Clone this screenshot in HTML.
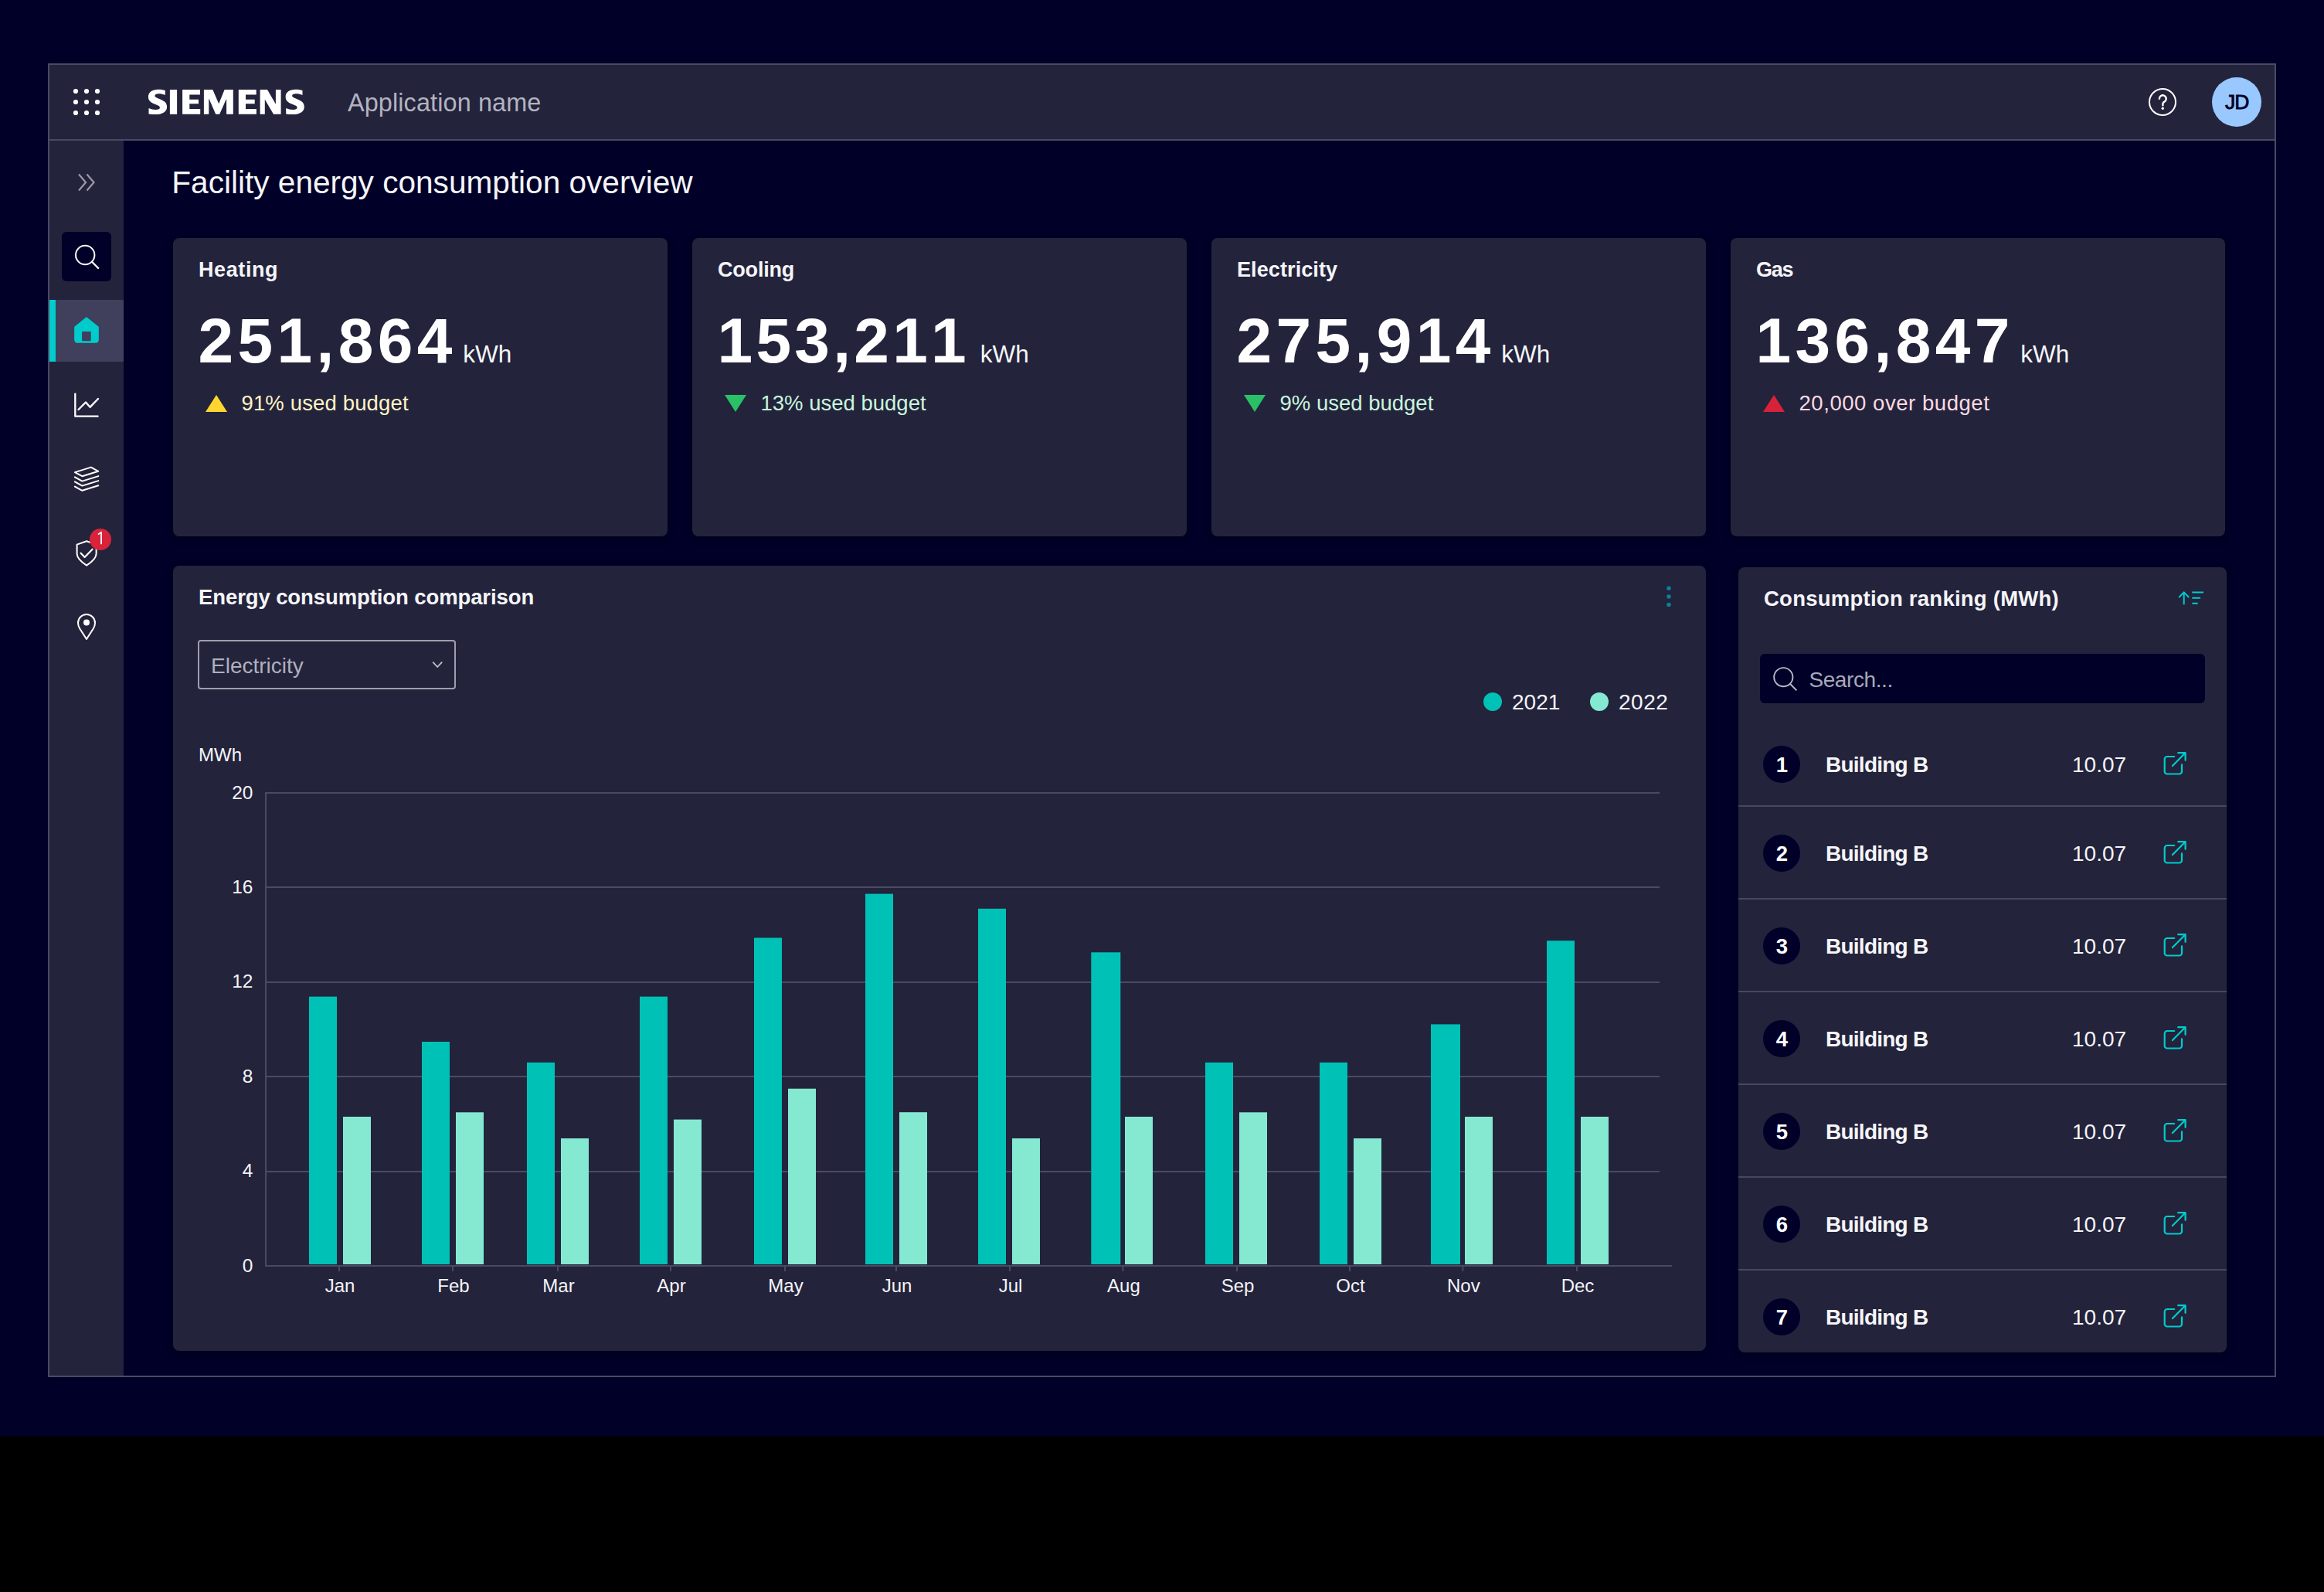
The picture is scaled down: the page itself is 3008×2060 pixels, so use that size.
<!DOCTYPE html>
<html><head><meta charset="utf-8"><title>Facility energy consumption overview</title>
<style>
html,body{margin:0;padding:0;background:#000;}
body{width:3008px;height:2060px;overflow:hidden;}
@media (max-width:2200px){body{zoom:0.5;}}
body{position:relative;font-family:"Liberation Sans", sans-serif;}
.t{position:absolute;white-space:nowrap;}
.r{position:absolute;}
.s{position:absolute;overflow:visible;}
</style></head><body>
<div class="r" style="left:0px;top:0px;width:3008px;height:1858px;background:#000028;border-radius:0px;"></div>
<div class="r" style="left:0px;top:1858px;width:3008px;height:202px;background:#000000;border-radius:0px;"></div>
<div class="r" style="left:62px;top:82px;width:2880px;height:1696px;border:2px solid #4a4a66;background:#000028"></div>
<div class="r" style="left:64px;top:84px;width:2880px;height:96px;background:#23233c;border-radius:0px;"></div>
<div class="r" style="left:64px;top:180px;width:2880px;height:2px;background:#4a4a66;border-radius:0px;"></div>
<div class="r" style="left:64px;top:182px;width:96px;height:1598px;background:#23233c;border-radius:0px;"></div>
<svg class="s" style="left:90px;top:110px;" width="44" height="44" viewBox="90 110 44 44"><circle cx="98" cy="118" r="3.1" fill="#fff"/><circle cx="98" cy="132" r="3.1" fill="#fff"/><circle cx="98" cy="146" r="3.1" fill="#fff"/><circle cx="112" cy="118" r="3.1" fill="#fff"/><circle cx="112" cy="132" r="3.1" fill="#fff"/><circle cx="112" cy="146" r="3.1" fill="#fff"/><circle cx="126" cy="118" r="3.1" fill="#fff"/><circle cx="126" cy="132" r="3.1" fill="#fff"/><circle cx="126" cy="146" r="3.1" fill="#fff"/></svg>
<svg class="s" style="left:186px;top:110px;" width="214" height="44" viewBox="186 110 214 44"><path d="M213.8 117.1 C210.5 116.2 207.8 115.8 204.8 115.8 C197 115.8 191.9 119.6 191.9 125.2 C191.9 130.5 195.5 132.6 200.5 134.8 L204.5 136.6 C206.3 137.4 206.9 138.2 206.9 139.3 C206.9 141 205 141.9 201.5 141.9 C198.5 141.9 195.3 141.2 192.5 140 V147.6 C195.5 148 198.5 148.1 201.5 148.1 C210.5 148.1 216.1 144.5 216.1 138.3 C216.1 133 212.8 130.8 208 128.7 L204 127 C201.5 126 200.4 125.2 200.4 124 C200.4 122.4 202.2 121.3 205.4 121.3 C208.2 121.3 211 121.9 213.8 122.9 Z" fill="#fff"/><path d="M213.8 117.1 C210.5 116.2 207.8 115.8 204.8 115.8 C197 115.8 191.9 119.6 191.9 125.2 C191.9 130.5 195.5 132.6 200.5 134.8 L204.5 136.6 C206.3 137.4 206.9 138.2 206.9 139.3 C206.9 141 205 141.9 201.5 141.9 C198.5 141.9 195.3 141.2 192.5 140 V147.6 C195.5 148 198.5 148.1 201.5 148.1 C210.5 148.1 216.1 144.5 216.1 138.3 C216.1 133 212.8 130.8 208 128.7 L204 127 C201.5 126 200.4 125.2 200.4 124 C200.4 122.4 202.2 121.3 205.4 121.3 C208.2 121.3 211 121.9 213.8 122.9 Z" fill="#fff" transform="translate(177.7 0)"/><rect x="219.9" y="116.1" width="9.2" height="31.7" fill="#fff"/><path d="M236.1 116.1 H259 V122.5 H245.3 V128.7 H257 V134.3 H245.3 V140.9 H259.2 V147.8 H236.1 Z" fill="#fff"/><path d="M236.1 116.1 H259 V122.5 H245.3 V128.7 H257 V134.3 H245.3 V140.9 H259.2 V147.8 H236.1 Z" fill="#fff" transform="translate(72.7 0)"/><path d="M263.9 116.1 H275.3 L283.2 134.2 L290.6 116.1 H301.8 V147.8 H293.1 V127.8 L284.2 147.8 H279.2 L270.3 127.3 V147.8 H263.9 Z" fill="#fff"/><path d="M336.6 116.1 H346 L356.9 134.7 V116.1 H363.6 V147.8 H354 L342.8 128.8 V147.8 H336.6 Z" fill="#fff"/></svg>
<div class="t" style="left:450.00px;top:117.27px;font-size:32.4px;line-height:32.4px;color:#b3b3c0;font-weight:400;letter-spacing:0.12px;">Application name</div>
<svg class="s" style="left:2775px;top:108px;" width="48" height="48" viewBox="2775 108 48 48"><circle cx="2799" cy="132" r="17" fill="none" stroke="#fff" stroke-width="2"/><path d="M2794.9 127.8 A4.4 4.4 0 1 1 2802.6 130.6 L2800.3 132.5 Q2799.4 133.2 2799.4 134.2 V136.3" fill="none" stroke="#fff" stroke-width="2.4" stroke-linecap="round" stroke-linejoin="round"/><circle cx="2799.3" cy="140.2" r="1.7" fill="#fff"/></svg>
<div class="r" style="left:2863px;top:100px;width:64px;height:64px;border-radius:50%;background:#99c8ff"></div>
<div class="t" style="left:2395.30px;width:1000px;text-align:center;top:119.27px;font-size:26.5px;line-height:26.5px;color:#000028;font-weight:400;letter-spacing:-1.0px;-webkit-text-stroke:0.8px #000028;">JD</div>
<svg class="s" style="left:96px;top:220px;" width="32" height="32" viewBox="96 220 32 32"><path d="M102 225.5 L111 236 L102 246.5 M112.5 225.5 L121.5 236 L112.5 246.5" fill="none" stroke="#9999aa" stroke-width="2.2"/></svg>
<div class="r" style="left:80px;top:300px;width:64px;height:64px;background:#000028;border-radius:6px;"></div>
<svg class="s" style="left:90px;top:310px;" width="44" height="44" viewBox="90 310 44 44"><circle cx="110.2" cy="330" r="12.2" fill="none" stroke="#fff" stroke-width="2"/><path d="M119 338.8 L127.8 347.6" stroke="#fff" stroke-width="2.2"/></svg>
<div class="r" style="left:64px;top:388px;width:96px;height:80px;background:#403f5c;border-radius:0px;"></div>
<div class="r" style="left:64px;top:388px;width:8px;height:80px;background:#00cccc;border-radius:0px;"></div>
<svg class="s" style="left:94px;top:406px;" width="36" height="40" viewBox="94 406 36 40"><path d="M111.9 411.6 L126.6 423.4 V439.7 a2.9 2.9 0 0 1 -2.9 2.9 H100.3 a2.9 2.9 0 0 1 -2.9 -2.9 V423.4 Z" fill="#00cccc" stroke="#00cccc" stroke-width="2.5" stroke-linejoin="round"/><rect x="106.1" y="429" width="11.6" height="12.2" rx="0.8" fill="#403f5c"/></svg>
<svg class="s" style="left:92px;top:504px;" width="40" height="40" viewBox="92 504 40 40"><path d="M97.3 509.6 V538.7 H126.6" fill="none" stroke="#fff" stroke-width="2.3" stroke-linecap="round" stroke-linejoin="round"/><path d="M101.5 530 L111 520.5 L116.5 526.8 L127 516" fill="none" stroke="#fff" stroke-width="2.4" stroke-linecap="round" stroke-linejoin="round"/></svg>
<svg class="s" style="left:92px;top:600px;" width="40" height="40" viewBox="92 600 40 40"><path d="M96.9 611.1 L117.8 604.6 L127.3 609.8 L106.4 616.2 Z M96.9 617.4 L106.4 622.6 L127.3 616.1 M96.9 623.4 L106.4 628.6 L127.3 622.1 M96.9 629.6 L106.4 634.8 L127.3 628.3" fill="none" stroke="#fff" stroke-width="2" stroke-linecap="round" stroke-linejoin="round"/></svg>
<svg class="s" style="left:94px;top:694px;" width="40" height="44" viewBox="94 694 40 44"><path d="M99.6 704.6 L112.1 700.2 L124.6 704.6 V716.5 C124.6 722.5 118.5 727.5 112.1 731.6 C105.7 727.5 99.6 722.5 99.6 716.5 Z" fill="none" stroke="#fff" stroke-width="2" stroke-linejoin="round"/><path d="M104.6 715.7 L109.6 721 L119.6 710.7" fill="none" stroke="#fff" stroke-width="2.2" stroke-linecap="round" stroke-linejoin="round"/></svg>
<div class="r" style="left:116px;top:684px;width:28px;height:28px;border-radius:50%;background:#d8233a"></div>
<svg class="s" style="left:116px;top:684px;" width="28" height="28" viewBox="116 684 28 28"><path d="M127 691.6 L131 688.6 V704.3" fill="none" stroke="#fff" stroke-width="1.8" stroke-linejoin="round"/></svg>
<svg class="s" style="left:94px;top:788px;" width="40" height="44" viewBox="94 788 40 44"><path d="M112 827 L103.3 813.5 C101.6 810.8 101 808.6 101 806 A11 11 0 0 1 123 806 C123 808.6 122.4 810.8 120.7 813.5 Z" fill="none" stroke="#fff" stroke-width="2" stroke-linejoin="round"/><circle cx="112" cy="805.6" r="4" fill="#fff"/></svg>
<div class="t" style="left:222.30px;top:216.23px;font-size:40.6px;line-height:40.6px;color:#f5f5f7;font-weight:400;letter-spacing:0px;">Facility energy consumption overview</div>
<div class="r" style="left:224px;top:308px;width:640px;height:386px;background:#23233c;border-radius:8px;box-shadow:0 3px 10px rgba(0,0,0,0.3)"></div>
<div class="t" style="left:257.00px;top:336.14px;font-size:27px;line-height:27px;color:#f5f5f7;font-weight:700;letter-spacing:0.6px;">Heating</div>
<div class="t" style="left:256.5px;top:399.59px;font-size:82px;line-height:82px;color:#fff;font-weight:700;white-space:nowrap"><span style="letter-spacing:5.4px">251,86</span>4<span style="font-size:31.5px;line-height:1;font-weight:400;margin-left:14px;color:#f5f5f7">kWh</span></div>
<svg class="s" style="left:262px;top:506px;" width="36" height="32" viewBox="262 506 36 32"><polygon points="266,533 280,511 294,533" fill="#ffd530"/></svg>
<div class="t" style="left:312.50px;top:508.32px;font-size:27.5px;line-height:27.5px;color:#fff3c4;font-weight:400;letter-spacing:0.14px;">91% used budget</div>
<div class="r" style="left:896px;top:308px;width:640px;height:386px;background:#23233c;border-radius:8px;box-shadow:0 3px 10px rgba(0,0,0,0.3)"></div>
<div class="t" style="left:929.00px;top:336.14px;font-size:27px;line-height:27px;color:#f5f5f7;font-weight:700;letter-spacing:-0.2px;">Cooling</div>
<div class="t" style="left:928.5px;top:399.59px;font-size:82px;line-height:82px;color:#fff;font-weight:700;white-space:nowrap"><span style="letter-spacing:4.3px">153,21</span>1<span style="font-size:31.5px;line-height:1;font-weight:400;margin-left:18px;color:#f5f5f7">kWh</span></div>
<svg class="s" style="left:934px;top:506px;" width="36" height="32" viewBox="934 506 36 32"><polygon points="938,511 966,511 952,533" fill="#2ac166"/></svg>
<div class="t" style="left:984.50px;top:508.32px;font-size:27.5px;line-height:27.5px;color:#c9f5dc;font-weight:400;letter-spacing:0px;">13% used budget</div>
<div class="r" style="left:1568px;top:308px;width:640px;height:386px;background:#23233c;border-radius:8px;box-shadow:0 3px 10px rgba(0,0,0,0.3)"></div>
<div class="t" style="left:1601.00px;top:336.14px;font-size:27px;line-height:27px;color:#f5f5f7;font-weight:700;letter-spacing:0.1px;">Electricity</div>
<div class="t" style="left:1600.5px;top:399.59px;font-size:82px;line-height:82px;color:#fff;font-weight:700;white-space:nowrap"><span style="letter-spacing:5.4px">275,91</span>4<span style="font-size:31.5px;line-height:1;font-weight:400;margin-left:14px;color:#f5f5f7">kWh</span></div>
<svg class="s" style="left:1606px;top:506px;" width="36" height="32" viewBox="1606 506 36 32"><polygon points="1610,511 1638,511 1624,533" fill="#2ac166"/></svg>
<div class="t" style="left:1656.50px;top:508.32px;font-size:27.5px;line-height:27.5px;color:#c9f5dc;font-weight:400;letter-spacing:0px;">9% used budget</div>
<div class="r" style="left:2240px;top:308px;width:640px;height:386px;background:#23233c;border-radius:8px;box-shadow:0 3px 10px rgba(0,0,0,0.3)"></div>
<div class="t" style="left:2273.00px;top:336.14px;font-size:27px;line-height:27px;color:#f5f5f7;font-weight:700;letter-spacing:-1.2px;">Gas</div>
<div class="t" style="left:2272.5px;top:399.59px;font-size:82px;line-height:82px;color:#fff;font-weight:700;white-space:nowrap"><span style="letter-spacing:5.4px">136,84</span>7<span style="font-size:31.5px;line-height:1;font-weight:400;margin-left:14px;color:#f5f5f7">kWh</span></div>
<svg class="s" style="left:2278px;top:506px;" width="36" height="32" viewBox="2278 506 36 32"><polygon points="2282,533 2296,511 2310,533" fill="#d8223a"/></svg>
<div class="t" style="left:2328.50px;top:508.32px;font-size:27.5px;line-height:27.5px;color:#fcd9e0;font-weight:400;letter-spacing:0.55px;">20,000 over budget</div>
<div class="r" style="left:224px;top:732px;width:1984px;height:1016px;background:#23233c;border-radius:8px;box-shadow:0 3px 10px rgba(0,0,0,0.3)"></div>
<div class="t" style="left:257.00px;top:758.92px;font-size:27.5px;line-height:27.5px;color:#f5f5f7;font-weight:700;letter-spacing:-0.1px;">Energy consumption comparison</div>
<svg class="s" style="left:2150px;top:752px;" width="20" height="40" viewBox="2150 752 20 40"><circle cx="2160" cy="761.3" r="2.7" fill="#0a83a0"/><circle cx="2160" cy="771.9" r="2.7" fill="#0a83a0"/><circle cx="2160" cy="782.4" r="2.7" fill="#0a83a0"/></svg>
<div class="r" style="left:256px;top:828px;width:330px;height:60px;border:2px solid #9e9eae;border-radius:4px;background:#23233c"></div>
<div class="t" style="left:273.00px;top:847.50px;font-size:28px;line-height:28px;color:#b0b0bd;font-weight:400;letter-spacing:0px;">Electricity</div>
<svg class="s" style="left:552px;top:850px;" width="28" height="20" viewBox="552 850 28 20"><path d="M560.2 856.6 L566.2 863 L572.2 856.6" fill="none" stroke="#c0c0cc" stroke-width="1.8"/></svg>
<div class="r" style="left:1920px;top:896px;width:24px;height:24px;border-radius:50%;background:#00c1b6"></div>
<div class="t" style="left:1957.00px;top:894.50px;font-size:28px;line-height:28px;color:#f5f5f7;font-weight:400;letter-spacing:0px;">2021</div>
<div class="r" style="left:2058px;top:896px;width:24px;height:24px;border-radius:50%;background:#85e9d2"></div>
<div class="t" style="left:2095.00px;top:894.50px;font-size:28px;line-height:28px;color:#f5f5f7;font-weight:400;letter-spacing:0.5px;">2022</div>
<div class="t" style="left:257.00px;top:964.68px;font-size:24px;line-height:24px;color:#f5f5f7;font-weight:400;letter-spacing:0px;">MWh</div>
<div class="r" style="left:343px;top:1025px;width:1805px;height:2px;background:#4a4a65;border-radius:0px;"></div>
<div class="t" style="right:2680.50px;top:1013.66px;font-size:24.5px;line-height:24.5px;color:#f5f5f7;font-weight:400;letter-spacing:0px;">20</div>
<div class="r" style="left:343px;top:1147px;width:1805px;height:2px;background:#4a4a65;border-radius:0px;"></div>
<div class="t" style="right:2680.50px;top:1136.06px;font-size:24.5px;line-height:24.5px;color:#f5f5f7;font-weight:400;letter-spacing:0px;">16</div>
<div class="r" style="left:343px;top:1270px;width:1805px;height:2px;background:#4a4a65;border-radius:0px;"></div>
<div class="t" style="right:2680.50px;top:1258.46px;font-size:24.5px;line-height:24.5px;color:#f5f5f7;font-weight:400;letter-spacing:0px;">12</div>
<div class="r" style="left:343px;top:1392px;width:1805px;height:2px;background:#4a4a65;border-radius:0px;"></div>
<div class="t" style="right:2680.50px;top:1380.86px;font-size:24.5px;line-height:24.5px;color:#f5f5f7;font-weight:400;letter-spacing:0px;">8</div>
<div class="r" style="left:343px;top:1515px;width:1805px;height:2px;background:#4a4a65;border-radius:0px;"></div>
<div class="t" style="right:2680.50px;top:1503.26px;font-size:24.5px;line-height:24.5px;color:#f5f5f7;font-weight:400;letter-spacing:0px;">4</div>
<div class="t" style="right:2680.50px;top:1625.66px;font-size:24.5px;line-height:24.5px;color:#f5f5f7;font-weight:400;letter-spacing:0px;">0</div>
<div class="r" style="left:343px;top:1025px;width:2px;height:614px;background:#4a4a65;border-radius:0px;"></div>
<div class="r" style="left:343px;top:1637px;width:1821px;height:2px;background:#4a4a65;border-radius:0px;"></div>
<svg class="s" style="left:340px;top:1100px;" width="1840" height="560" viewBox="340 1100 1840 560"><rect x="400" y="1289.6" width="36" height="346.4" fill="#00c1b6"/><rect x="444" y="1445" width="36" height="191.0" fill="#85e9d2"/><rect x="438" y="1639" width="2" height="6" fill="#4a4a65"/><rect x="546" y="1348" width="36" height="288.0" fill="#00c1b6"/><rect x="590" y="1439.3" width="36" height="196.7" fill="#85e9d2"/><rect x="585" y="1639" width="2" height="6" fill="#4a4a65"/><rect x="682" y="1374.8" width="36" height="261.2" fill="#00c1b6"/><rect x="726" y="1473" width="36" height="163.0" fill="#85e9d2"/><rect x="721" y="1639" width="2" height="6" fill="#4a4a65"/><rect x="828" y="1289.6" width="36" height="346.4" fill="#00c1b6"/><rect x="872" y="1448.6" width="36" height="187.4" fill="#85e9d2"/><rect x="867" y="1639" width="2" height="6" fill="#4a4a65"/><rect x="976" y="1213.5" width="36" height="422.5" fill="#00c1b6"/><rect x="1020" y="1408.7" width="36" height="227.3" fill="#85e9d2"/><rect x="1015" y="1639" width="2" height="6" fill="#4a4a65"/><rect x="1120" y="1156.6" width="36" height="479.4" fill="#00c1b6"/><rect x="1164" y="1439.2" width="36" height="196.8" fill="#85e9d2"/><rect x="1159" y="1639" width="2" height="6" fill="#4a4a65"/><rect x="1266" y="1175.8" width="36" height="460.2" fill="#00c1b6"/><rect x="1310" y="1473" width="36" height="163.0" fill="#85e9d2"/><rect x="1306" y="1639" width="2" height="6" fill="#4a4a65"/><rect x="1412.3" y="1232.3" width="38" height="403.7" fill="#00c1b6"/><rect x="1456" y="1445" width="36" height="191.0" fill="#85e9d2"/><rect x="1452.4" y="1639" width="2" height="6" fill="#4a4a65"/><rect x="1560" y="1374.8" width="36" height="261.2" fill="#00c1b6"/><rect x="1604" y="1439.3" width="36" height="196.7" fill="#85e9d2"/><rect x="1600" y="1639" width="2" height="6" fill="#4a4a65"/><rect x="1708" y="1374.8" width="36" height="261.2" fill="#00c1b6"/><rect x="1752" y="1473" width="36" height="163.0" fill="#85e9d2"/><rect x="1746" y="1639" width="2" height="6" fill="#4a4a65"/><rect x="1852" y="1325.4" width="38" height="310.6" fill="#00c1b6"/><rect x="1896" y="1445" width="36" height="191.0" fill="#85e9d2"/><rect x="1892.3" y="1639" width="2" height="6" fill="#4a4a65"/><rect x="2002" y="1217.2" width="36" height="418.8" fill="#00c1b6"/><rect x="2046" y="1445" width="36" height="191.0" fill="#85e9d2"/><rect x="2040" y="1639" width="2" height="6" fill="#4a4a65"/></svg>
<div class="t" style="left:-60.00px;width:1000px;text-align:center;top:1652.48px;font-size:24px;line-height:24px;color:#f5f5f7;font-weight:400;letter-spacing:0px;">Jan</div>
<div class="t" style="left:87.00px;width:1000px;text-align:center;top:1652.48px;font-size:24px;line-height:24px;color:#f5f5f7;font-weight:400;letter-spacing:0px;">Feb</div>
<div class="t" style="left:223.00px;width:1000px;text-align:center;top:1652.48px;font-size:24px;line-height:24px;color:#f5f5f7;font-weight:400;letter-spacing:0px;">Mar</div>
<div class="t" style="left:369.00px;width:1000px;text-align:center;top:1652.48px;font-size:24px;line-height:24px;color:#f5f5f7;font-weight:400;letter-spacing:0px;">Apr</div>
<div class="t" style="left:517.00px;width:1000px;text-align:center;top:1652.48px;font-size:24px;line-height:24px;color:#f5f5f7;font-weight:400;letter-spacing:0px;">May</div>
<div class="t" style="left:661.00px;width:1000px;text-align:center;top:1652.48px;font-size:24px;line-height:24px;color:#f5f5f7;font-weight:400;letter-spacing:0px;">Jun</div>
<div class="t" style="left:808.00px;width:1000px;text-align:center;top:1652.48px;font-size:24px;line-height:24px;color:#f5f5f7;font-weight:400;letter-spacing:0px;">Jul</div>
<div class="t" style="left:954.40px;width:1000px;text-align:center;top:1652.48px;font-size:24px;line-height:24px;color:#f5f5f7;font-weight:400;letter-spacing:0px;">Aug</div>
<div class="t" style="left:1102.00px;width:1000px;text-align:center;top:1652.48px;font-size:24px;line-height:24px;color:#f5f5f7;font-weight:400;letter-spacing:0px;">Sep</div>
<div class="t" style="left:1248.00px;width:1000px;text-align:center;top:1652.48px;font-size:24px;line-height:24px;color:#f5f5f7;font-weight:400;letter-spacing:0px;">Oct</div>
<div class="t" style="left:1394.30px;width:1000px;text-align:center;top:1652.48px;font-size:24px;line-height:24px;color:#f5f5f7;font-weight:400;letter-spacing:0px;">Nov</div>
<div class="t" style="left:1542.00px;width:1000px;text-align:center;top:1652.48px;font-size:24px;line-height:24px;color:#f5f5f7;font-weight:400;letter-spacing:0px;">Dec</div>
<div class="r" style="left:2250px;top:734px;width:632px;height:1016px;background:#23233c;border-radius:8px;box-shadow:0 3px 10px rgba(0,0,0,0.3)"></div>
<div class="t" style="left:2283.00px;top:760.72px;font-size:27.5px;line-height:27.5px;color:#f5f5f7;font-weight:700;letter-spacing:0.25px;">Consumption ranking (MWh)</div>
<svg class="s" style="left:2814px;top:760px;" width="44" height="28" viewBox="2814 760 44 28"><path d="M2826.7 782.3 V766.5 M2820.2 773 L2826.7 766.4 L2833.2 773" fill="none" stroke="#00cccc" stroke-width="2"/><path d="M2837.3 766.4 H2852 M2837.3 773.7 H2848 M2837.3 780.8 H2844.7" fill="none" stroke="#00cccc" stroke-width="2"/></svg>
<div class="r" style="left:2278px;top:846px;width:576px;height:64px;background:#000028;border-radius:6px;"></div>
<svg class="s" style="left:2290px;top:858px;" width="42" height="42" viewBox="2290 858 42 42"><circle cx="2308.3" cy="876.2" r="12.1" fill="none" stroke="#b8b8c4" stroke-width="1.9"/><path d="M2316.9 884.8 L2325.4 893.4" stroke="#b8b8c4" stroke-width="2"/></svg>
<div class="t" style="left:2341.40px;top:865.50px;font-size:28px;line-height:28px;color:#a9a9b8;font-weight:400;letter-spacing:-0.4px;">Search...</div>
<div class="r" style="left:2282px;top:965px;width:48px;height:48px;border-radius:50%;background:#000028"></div>
<div class="t" style="left:1806.50px;width:1000px;text-align:center;top:976.12px;font-size:27.5px;line-height:27.5px;color:#fff;font-weight:700;letter-spacing:0px;">1</div>
<div class="t" style="left:2363.00px;top:975.70px;font-size:28px;line-height:28px;color:#f5f5f7;font-weight:700;letter-spacing:-0.75px;">Building B</div>
<div class="t" style="left:2682.00px;top:975.70px;font-size:28px;line-height:28px;color:#f5f5f7;font-weight:400;letter-spacing:0px;">10.07</div>
<svg class="s" style="left:2796px;top:969px;" width="40" height="40" viewBox="2796 969 40 40"><path d="M2814.2 979 H2805 a3.3 3.3 0 0 0 -3.3 3.3 V998.2 a3.3 3.3 0 0 0 3.3 3.3 H2820.7 a3.3 3.3 0 0 0 3.3 -3.3 V989.3" fill="none" stroke="#00cccc" stroke-width="2.2" stroke-linecap="round" stroke-linejoin="round"/><path d="M2811.9 991.1 L2828 974.8 M2819.2 974.2 H2828.6 V983.8" fill="none" stroke="#00cccc" stroke-width="2.2" stroke-linecap="round" stroke-linejoin="round"/></svg>
<div class="r" style="left:2282px;top:1080px;width:48px;height:48px;border-radius:50%;background:#000028"></div>
<div class="t" style="left:1806.50px;width:1000px;text-align:center;top:1091.12px;font-size:27.5px;line-height:27.5px;color:#fff;font-weight:700;letter-spacing:0px;">2</div>
<div class="t" style="left:2363.00px;top:1090.70px;font-size:28px;line-height:28px;color:#f5f5f7;font-weight:700;letter-spacing:-0.75px;">Building B</div>
<div class="t" style="left:2682.00px;top:1090.70px;font-size:28px;line-height:28px;color:#f5f5f7;font-weight:400;letter-spacing:0px;">10.07</div>
<svg class="s" style="left:2796px;top:1084px;" width="40" height="40" viewBox="2796 1084 40 40"><path d="M2814.2 1094 H2805 a3.3 3.3 0 0 0 -3.3 3.3 V1113.2 a3.3 3.3 0 0 0 3.3 3.3 H2820.7 a3.3 3.3 0 0 0 3.3 -3.3 V1104.3" fill="none" stroke="#00cccc" stroke-width="2.2" stroke-linecap="round" stroke-linejoin="round"/><path d="M2811.9 1106.1 L2828 1089.8 M2819.2 1089.2 H2828.6 V1098.8" fill="none" stroke="#00cccc" stroke-width="2.2" stroke-linecap="round" stroke-linejoin="round"/></svg>
<div class="r" style="left:2282px;top:1200px;width:48px;height:48px;border-radius:50%;background:#000028"></div>
<div class="t" style="left:1806.50px;width:1000px;text-align:center;top:1211.12px;font-size:27.5px;line-height:27.5px;color:#fff;font-weight:700;letter-spacing:0px;">3</div>
<div class="t" style="left:2363.00px;top:1210.70px;font-size:28px;line-height:28px;color:#f5f5f7;font-weight:700;letter-spacing:-0.75px;">Building B</div>
<div class="t" style="left:2682.00px;top:1210.70px;font-size:28px;line-height:28px;color:#f5f5f7;font-weight:400;letter-spacing:0px;">10.07</div>
<svg class="s" style="left:2796px;top:1204px;" width="40" height="40" viewBox="2796 1204 40 40"><path d="M2814.2 1214 H2805 a3.3 3.3 0 0 0 -3.3 3.3 V1233.2 a3.3 3.3 0 0 0 3.3 3.3 H2820.7 a3.3 3.3 0 0 0 3.3 -3.3 V1224.3" fill="none" stroke="#00cccc" stroke-width="2.2" stroke-linecap="round" stroke-linejoin="round"/><path d="M2811.9 1226.1 L2828 1209.8 M2819.2 1209.2 H2828.6 V1218.8" fill="none" stroke="#00cccc" stroke-width="2.2" stroke-linecap="round" stroke-linejoin="round"/></svg>
<div class="r" style="left:2282px;top:1320px;width:48px;height:48px;border-radius:50%;background:#000028"></div>
<div class="t" style="left:1806.50px;width:1000px;text-align:center;top:1331.12px;font-size:27.5px;line-height:27.5px;color:#fff;font-weight:700;letter-spacing:0px;">4</div>
<div class="t" style="left:2363.00px;top:1330.70px;font-size:28px;line-height:28px;color:#f5f5f7;font-weight:700;letter-spacing:-0.75px;">Building B</div>
<div class="t" style="left:2682.00px;top:1330.70px;font-size:28px;line-height:28px;color:#f5f5f7;font-weight:400;letter-spacing:0px;">10.07</div>
<svg class="s" style="left:2796px;top:1324px;" width="40" height="40" viewBox="2796 1324 40 40"><path d="M2814.2 1334 H2805 a3.3 3.3 0 0 0 -3.3 3.3 V1353.2 a3.3 3.3 0 0 0 3.3 3.3 H2820.7 a3.3 3.3 0 0 0 3.3 -3.3 V1344.3" fill="none" stroke="#00cccc" stroke-width="2.2" stroke-linecap="round" stroke-linejoin="round"/><path d="M2811.9 1346.1 L2828 1329.8 M2819.2 1329.2 H2828.6 V1338.8" fill="none" stroke="#00cccc" stroke-width="2.2" stroke-linecap="round" stroke-linejoin="round"/></svg>
<div class="r" style="left:2282px;top:1440px;width:48px;height:48px;border-radius:50%;background:#000028"></div>
<div class="t" style="left:1806.50px;width:1000px;text-align:center;top:1451.12px;font-size:27.5px;line-height:27.5px;color:#fff;font-weight:700;letter-spacing:0px;">5</div>
<div class="t" style="left:2363.00px;top:1450.70px;font-size:28px;line-height:28px;color:#f5f5f7;font-weight:700;letter-spacing:-0.75px;">Building B</div>
<div class="t" style="left:2682.00px;top:1450.70px;font-size:28px;line-height:28px;color:#f5f5f7;font-weight:400;letter-spacing:0px;">10.07</div>
<svg class="s" style="left:2796px;top:1444px;" width="40" height="40" viewBox="2796 1444 40 40"><path d="M2814.2 1454 H2805 a3.3 3.3 0 0 0 -3.3 3.3 V1473.2 a3.3 3.3 0 0 0 3.3 3.3 H2820.7 a3.3 3.3 0 0 0 3.3 -3.3 V1464.3" fill="none" stroke="#00cccc" stroke-width="2.2" stroke-linecap="round" stroke-linejoin="round"/><path d="M2811.9 1466.1 L2828 1449.8 M2819.2 1449.2 H2828.6 V1458.8" fill="none" stroke="#00cccc" stroke-width="2.2" stroke-linecap="round" stroke-linejoin="round"/></svg>
<div class="r" style="left:2282px;top:1560px;width:48px;height:48px;border-radius:50%;background:#000028"></div>
<div class="t" style="left:1806.50px;width:1000px;text-align:center;top:1571.12px;font-size:27.5px;line-height:27.5px;color:#fff;font-weight:700;letter-spacing:0px;">6</div>
<div class="t" style="left:2363.00px;top:1570.70px;font-size:28px;line-height:28px;color:#f5f5f7;font-weight:700;letter-spacing:-0.75px;">Building B</div>
<div class="t" style="left:2682.00px;top:1570.70px;font-size:28px;line-height:28px;color:#f5f5f7;font-weight:400;letter-spacing:0px;">10.07</div>
<svg class="s" style="left:2796px;top:1564px;" width="40" height="40" viewBox="2796 1564 40 40"><path d="M2814.2 1574 H2805 a3.3 3.3 0 0 0 -3.3 3.3 V1593.2 a3.3 3.3 0 0 0 3.3 3.3 H2820.7 a3.3 3.3 0 0 0 3.3 -3.3 V1584.3" fill="none" stroke="#00cccc" stroke-width="2.2" stroke-linecap="round" stroke-linejoin="round"/><path d="M2811.9 1586.1 L2828 1569.8 M2819.2 1569.2 H2828.6 V1578.8" fill="none" stroke="#00cccc" stroke-width="2.2" stroke-linecap="round" stroke-linejoin="round"/></svg>
<div class="r" style="left:2282px;top:1680px;width:48px;height:48px;border-radius:50%;background:#000028"></div>
<div class="t" style="left:1806.50px;width:1000px;text-align:center;top:1691.12px;font-size:27.5px;line-height:27.5px;color:#fff;font-weight:700;letter-spacing:0px;">7</div>
<div class="t" style="left:2363.00px;top:1690.70px;font-size:28px;line-height:28px;color:#f5f5f7;font-weight:700;letter-spacing:-0.75px;">Building B</div>
<div class="t" style="left:2682.00px;top:1690.70px;font-size:28px;line-height:28px;color:#f5f5f7;font-weight:400;letter-spacing:0px;">10.07</div>
<svg class="s" style="left:2796px;top:1684px;" width="40" height="40" viewBox="2796 1684 40 40"><path d="M2814.2 1694 H2805 a3.3 3.3 0 0 0 -3.3 3.3 V1713.2 a3.3 3.3 0 0 0 3.3 3.3 H2820.7 a3.3 3.3 0 0 0 3.3 -3.3 V1704.3" fill="none" stroke="#00cccc" stroke-width="2.2" stroke-linecap="round" stroke-linejoin="round"/><path d="M2811.9 1706.1 L2828 1689.8 M2819.2 1689.2 H2828.6 V1698.8" fill="none" stroke="#00cccc" stroke-width="2.2" stroke-linecap="round" stroke-linejoin="round"/></svg>
<div class="r" style="left:2250px;top:1042px;width:632px;height:2px;background:#47475f;border-radius:0px;"></div>
<div class="r" style="left:2250px;top:1162px;width:632px;height:2px;background:#47475f;border-radius:0px;"></div>
<div class="r" style="left:2250px;top:1282px;width:632px;height:2px;background:#47475f;border-radius:0px;"></div>
<div class="r" style="left:2250px;top:1402px;width:632px;height:2px;background:#47475f;border-radius:0px;"></div>
<div class="r" style="left:2250px;top:1522px;width:632px;height:2px;background:#47475f;border-radius:0px;"></div>
<div class="r" style="left:2250px;top:1642px;width:632px;height:2px;background:#47475f;border-radius:0px;"></div>
</body></html>
